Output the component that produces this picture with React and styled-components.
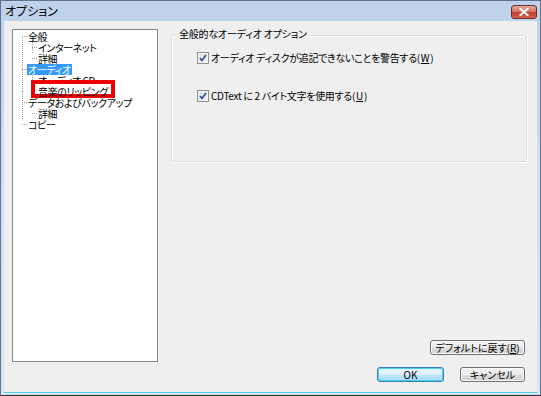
import React from 'react';
import styled, { createGlobalStyle } from 'styled-components';

const Global = createGlobalStyle`
  html, body { margin: 0; padding: 0; background: #ffffff; }
  body {
    font-family: "Noto Sans CJK JP", "DejaVu Sans", sans-serif;
    font-size: 10px;
    color: #000;
  }
  * { box-sizing: border-box; }
`;

const Window = styled.div`
  width: 541px;
  height: 396px;
  display: flex;
  flex-direction: column;
  border: 1px solid #5d7390;
  border-bottom-color: #1c2a3a;
  background: linear-gradient(180deg, #bdd1ea 0%, #cfdef0 40%, #d9e5f3 100%);
  padding: 0 3px 2px 3px;
`;

const TitleBar = styled.div`
  height: 20px;
  display: flex;
  align-items: center;
  justify-content: space-between;
  padding: 0 0 0 1px;
`;

const Title = styled.span`
  font-size: 12px;
  line-height: 12px;
  font-feature-settings: "palt";
`;

const CloseButton = styled.div`
  width: 26px;
  height: 14px;
  margin-top: 2px;
  border: 1px solid #6e2d28;
  border-radius: 3px;
  background: linear-gradient(180deg, #e8a79b 0%, #d7756a 45%, #c2402f 55%, #d4604c 100%);
  display: flex;
  align-items: center;
  justify-content: center;
`;

const Body = styled.div`
  flex: 1;
  background: #efefef;
  border-bottom: 1px solid #4fd0f2;
  display: grid;
  grid-template-columns: 146px 1fr;
  grid-template-rows: 1fr auto;
  column-gap: 13px;
  padding: 8px 10px 10px 8px;
`;

const TreePanel = styled.div`
  background: #ffffff;
  border: 1px solid #828790;
  padding-top: 1px;
  overflow: hidden;
`;

const TreeList = styled.ul`
  list-style: none;
  margin: 0;
  padding: 0 0 0 ${(p) => (p.$child ? 10 : 14)}px;
  position: relative;
`;

const TreeItem = styled.li`
  position: relative;
  line-height: 11px;

  &::before {
    content: '';
    position: absolute;
    left: -5px;
    top: 5px;
    width: 5px;
    border-top: 1px dotted #a0a0a0;
  }
  &::after {
    content: '';
    position: absolute;
    left: -5px;
    top: ${(p) => (p.$first ? 5 : -6)}px;
    height: ${(p) => (p.$last ? (p.$first ? 0 : 11) : 'calc(100% + 6px)')};
    border-left: 1px dotted #a0a0a0;
  }
`;

const Label = styled.span`
  display: inline-block;
  height: 11px;
  line-height: 11px;
  padding: 0 1px;
  font-size: 10px;
  letter-spacing: -0.4px;
  font-feature-settings: "palt";
  white-space: nowrap;
  position: relative;
  z-index: 1;
  background: ${(p) => (p.$selected ? '#3399ff' : 'transparent')};
  color: ${(p) => (p.$selected ? '#ffffff' : '#000000')};

  ${(p) =>
    p.$marked &&
    `
    &::before {
      content: '';
      position: absolute;
      left: -6px;
      right: -6px;
      top: -6px;
      bottom: -1px;
      border: 4px solid #ee0000;
      background: #ffffff;
      z-index: -1;
    }
  `}
`;

const RightColumn = styled.div`
  display: flex;
  flex-direction: column;
`;

const GroupBox = styled.section`
  margin-top: 6px;
  height: 127px;
  border: 1px solid #d5dfe5;
  border-radius: 3px;
  box-shadow: inset 1px 1px 0 #ffffff, 1px 1px 0 #ffffff;
  padding: 0 0 0 25px;
`;

const GroupTitle = styled.div`
  width: max-content;
  margin: -8px 0 0 -20px;
  padding: 0 2px;
  height: 12px;
  line-height: 12px;
  background: #efefef;
  font-size: 10px;
  letter-spacing: -0.2px;
  font-feature-settings: "palt";
`;

const CheckRow = styled.label`
  display: flex;
  align-items: center;
  gap: 1px;
  height: 12px;
  line-height: 12px;
  margin-top: ${(p) => p.$top}px;
  font-size: 10px;
  letter-spacing: -0.3px;
  font-feature-settings: "palt";
  white-space: nowrap;
`;

const CheckBox = styled.span`
  width: 12px;
  height: 12px;
  margin-right: 1px;
  border: 1px solid #8f8f8f;
  background: linear-gradient(135deg, #dcdcdc 0%, #f6f6f6 100%);
  box-shadow: inset 0 0 0 1px #f4f4f4;
  display: flex;
  align-items: center;
  justify-content: center;
`;

const Spacer = styled.div`
  flex: 1;
`;

const Button = styled.button`
  font-family: inherit;
  font-size: 10px;
  font-feature-settings: "palt";
  height: ${(p) => p.$h || 15}px;
  width: ${(p) => p.$w}px;
  padding: 0;
  line-height: 11px;
  border: 1px solid ${(p) => (p.$focus ? '#3c7fb1' : '#707070')};
  border-radius: 3px;
  color: #000;
  white-space: nowrap;
  background: ${(p) =>
    p.$focus
      ? 'linear-gradient(180deg, #eaf6fd 0%, #d9f0fc 50%, #bee6fd 51%, #a7d9f5 100%)'
      : 'linear-gradient(180deg, #f2f2f2 0%, #ebebeb 50%, #dddddd 51%, #cfcfcf 100%)'};
  box-shadow: inset 0 0 0 1px ${(p) => (p.$focus ? '#48d1f7' : '#fbfbfb')};
`;

const DefaultButton = styled(Button)`
  align-self: flex-end;
  margin-right: 2px;
  margin-bottom: 7px;
`;

const Footer = styled.div`
  grid-column: 1 / span 2;
  display: flex;
  justify-content: flex-end;
  gap: 16px;
  padding-top: 5px;
  padding-right: 2px;
`;

const tree = [
  { label: '全般', children: ['インターネット', '詳細'] },
  { label: 'オーディオ', selected: true, children: ['オーディオ CD', { label: '音楽のリッピング', marked: true }] },
  { label: 'データおよびバックアップ', children: ['詳細'] },
  { label: 'コピー', children: [] },
];

const asNode = (n) => (typeof n === 'string' ? { label: n } : n);

const Tree = ({ nodes, child }) => (
  <TreeList $child={child}>
    {nodes.map((raw, i) => {
      const n = asNode(raw);
      return (
        <TreeItem key={n.label + i} $first={i === 0 && !child} $last={i === nodes.length - 1}>
          <Label $selected={n.selected} $marked={n.marked}>{n.label}</Label>
          {n.children && n.children.length > 0 && <Tree nodes={n.children} child />}
        </TreeItem>
      );
    })}
  </TreeList>
);

const Check = () => (
  <CheckBox>
    <svg width="8" height="8" viewBox="0 0 8 8">
      <path d="M1 4 L3 6.5 L7 1" fill="none" stroke="#2a4d9b" strokeWidth="1.6" />
    </svg>
  </CheckBox>
);

export default function App() {
  return (
    <>
      <Global />
      <Window>
        <TitleBar>
          <Title>オプション</Title>
          <CloseButton>
            <svg width="10" height="8" viewBox="0 0 10 8">
              <path d="M1.5 1 L8.5 7 M8.5 1 L1.5 7" stroke="#ffffff" strokeWidth="2" strokeLinecap="square" />
            </svg>
          </CloseButton>
        </TitleBar>
        <Body>
          <TreePanel>
            <Tree nodes={tree} />
          </TreePanel>
          <RightColumn>
            <GroupBox>
              <GroupTitle>全般的なオーディオ オプション</GroupTitle>
              <CheckRow $top={12}>
                <Check />
                オーディオ ディスクが追記できないことを警告する(<u>W</u>)
              </CheckRow>
              <CheckRow $top={26}>
                <Check />
                CDText に 2 バイト文字を使用する(<u>U</u>)
              </CheckRow>
            </GroupBox>
            <Spacer />
            <DefaultButton $w={95}>デフォルトに戻す(<u>R</u>)</DefaultButton>
          </RightColumn>
          <Footer>
            <Button $w={67} $focus>OK</Button>
            <Button $w={65}>キャンセル</Button>
          </Footer>
        </Body>
      </Window>
    </>
  );
}
